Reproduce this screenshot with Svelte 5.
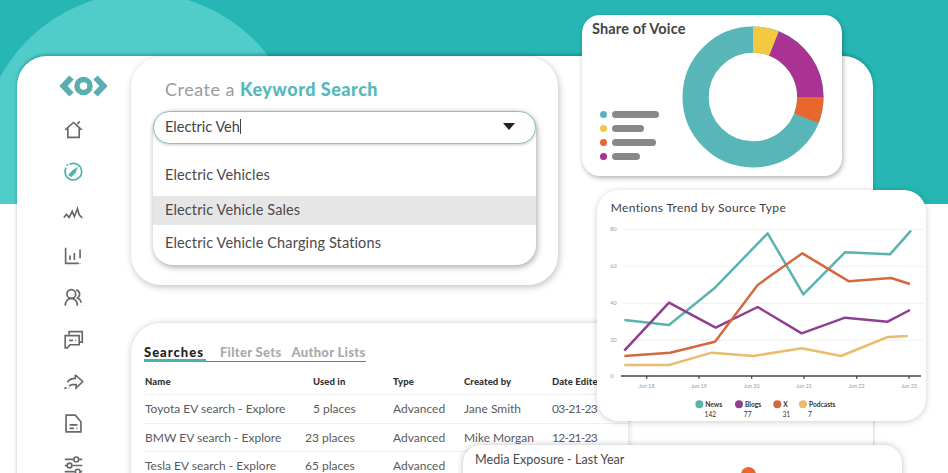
<script>
  const rows = [
    { name: 'Toyota EV search - Explore', used: '5 places', indent: true, type: 'Advanced', by: 'Jane Smith', date: '03-21-23' },
    { name: 'BMW EV search - Explore', used: '23 places', indent: false, type: 'Advanced', by: 'Mike Morgan', date: '12-21-23' },
    { name: 'Tesla EV search - Explore', used: '65 places', indent: false, type: 'Advanced', by: '', date: '' }
  ];
  const suggestions = ['Electric Vehicles', 'Electric Vehicle Sales', 'Electric Vehicle Charging Stations'];
  const legend = [
    { c: '#58b6b8', w: 47 },
    { c: '#f5c842', w: 32 },
    { c: '#e8672c', w: 44 },
    { c: '#a93292', w: 28 }
  ];
  const series = [
    { c: '#5bb3ad', p: '88,390 222,405 358,295 518,130 625,313 750,187 885,193 948,122' },
    { c: '#8f3f8f', p: '88,482 222,338 362,413 488,351 620,430 750,383 878,395 945,360' },
    { c: '#d2693f', p: '88,498 225,488 360,455 488,285 520,262 622,190 762,274 888,264 945,282' },
    { c: '#e9bd6c', p: '88,525 222,525 350,488 475,498 620,475 738,498 878,441 938,438' }
  ];
  const ticks = [
    { x: 155, t: 'Jun 18' }, { x: 312, t: 'Jun 19' }, { x: 470, t: 'Jun 20' },
    { x: 627, t: 'Jun 21' }, { x: 785, t: 'Jun 22' }, { x: 942, t: 'Jun 23' }
  ];
  const yLabels = [{ y: 118, t: '80' }, { y: 228, t: '60' }, { y: 340, t: '40' }, { y: 450, t: '20' }, { y: 558, t: '0' }];
  const keys = [
    { c: '#5bb3ad', x: 313, t: 'News', n: '142', nx: 340 },
    { c: '#8f3f8f', x: 432, t: 'Blogs', n: '77', nx: 452 },
    { c: '#d2693f', x: 547, t: 'X', n: '31', nx: 568 },
    { c: '#e9bd6c', x: 624, t: 'Podcasts', n: '7', nx: 639 }
  ];
</script>

<div class="stage">
  <div class="hero"><div class="circle"></div></div>

  <div class="panel">
    <nav class="rail">
      <svg class="logo" viewBox="0 0 47 22" aria-label="logo">
        <path d="M11.500 2.500 3.500 11l8 8.500M35.500 2.500 43.500 11l-8 8.500" />
        <circle cx="23.500" cy="11" r="6.500" />
      </svg>
      <svg class="ico" viewBox="0 0 24 24"><path d="M2.500 12.500 12 4l9.500 8.500M5.500 10.500V21h13V10.500M16.500 6l2.500-3.500" /></svg>
      <svg class="ico on" viewBox="0 0 24 24"><path d="M7.500 3.700A9.500 9.500 0 1 1 3.500 7.500" /><path class="fill" d="M17 6.500 14.500 13.500 10 18l-3.500-.500 0-2.500 4.500-4.500z" /><circle class="fill" cx="5" cy="4.500" r="1.100" /></svg>
      <svg class="ico" viewBox="0 0 24 24"><path d="M1 16.500 4 13l3 3.500 3.500-7L13 15.500 16.500 6.500 18.500 13.500 22 17" /></svg>
      <svg class="ico" viewBox="0 0 24 24"><path d="M3 3v18h15M8 17v-5M13 17V9M19.500 15V5M19.500 20.500v.5" /></svg>
      <svg class="ico" viewBox="0 0 24 24"><circle cx="9.500" cy="8" r="5" /><path d="M2.500 21.500c0-5 3-8.500 7-8.500s7 3.500 7 8.500M15 3.300a5 5 0 0 1 1.500 9.200c2.500 1 4 3.500 4 5.500M21 21v.5" /></svg>
      <svg class="ico" viewBox="0 0 24 24"><path d="M7 6.500V3h15v12h-3" /><path d="M2.500 7.500h16V18H8l-3 3.500H2.500zM7 13h4.500M14 13h1" /></svg>
      <svg class="ico" viewBox="0 0 24 24"><path d="M14 4.500 22.500 12 15 19.500v-4H10.500L7 17M5 13C7 9.500 10 8.500 14 8.500V4.500M1.500 19.500h2.500M6.500 19.500h.5" /></svg>
      <svg class="ico" viewBox="0 0 24 24"><path d="M3.500 2.500h10.500l6.500 7.500v11.500H3.500zM7.500 13.500h9M7.500 17.500h5M15.500 17.500h1" /></svg>
      <svg class="ico" viewBox="0 0 24 24"><path d="M2 5h10M18.500 5h3.500M2 12h2.500M11 12h11M2 19h11.500M20 19h2" /><circle cx="15.200" cy="5" r="2.700" /><circle cx="7.500" cy="12" r="2.700" /><circle cx="16.800" cy="19" r="2.700" /></svg>
    </nav>
  </div>

  <section class="card search">
    <h2>Create a <b>Keyword Search</b></h2>
    <div class="combo">
      <div class="input"><span>Electric Veh<i class="cursor"></i></span><i class="caret"></i></div>
      <ul>
        {#each suggestions as s, i}
          <li class:hl={i === 1}>{s}</li>
        {/each}
      </ul>
    </div>
  </section>

  <section class="card lists">
    <div class="tabs">
      <span class="tab active">Searches</span>
      <span class="tab">Filter Sets</span>
      <span class="tab">Author Lists</span>
    </div>
    <div class="row head">
      <span>Name</span><span class="indent">Used in</span><span>Type</span><span>Created by</span><span>Date Edited</span>
    </div>
    {#each rows as r}
      <div class="row">
        <span>{r.name}</span>
        <span class:indent={r.indent}>{r.used}</span>
        <span>{r.type}</span>
        <span>{r.by}</span>
        <span class="date">{r.date}</span>
      </div>
    {/each}
  </section>

  <section class="card voice">
    <h3>Share of Voice</h3>
    <ul class="keys">
      {#each legend as l}
        <li><i class="dot" style:background={l.c}></i><i class="bar" style:width="{l.w}px"></i></li>
      {/each}
    </ul>
    <svg class="donut" viewBox="0 0 142 142">
      <g fill="none" stroke-width="26.200" transform="rotate(-90 71 71)">
        <circle cx="71" cy="71" r="57.400" pathLength="360" stroke="#58b6b8" />
        <circle cx="71" cy="71" r="57.400" pathLength="360" stroke="#f5c842" stroke-dasharray="21.500 338.500" />
        <circle cx="71" cy="71" r="57.400" pathLength="360" stroke="#a93292" stroke-dasharray="68.500 291.500" stroke-dashoffset="-21.500" />
        <circle cx="71" cy="71" r="57.400" pathLength="360" stroke="#e8672c" stroke-dasharray="21.700 338.300" stroke-dashoffset="-90" />
      </g>
    </svg>
  </section>

  <section class="card trend">
    <svg viewBox="0 0 987 693" class="chart">
      <text class="ctitle" x="41" y="67">Mentions Trend by Source Type</text>
      {#each yLabels as y, i}
        {#if i < 4}<line x1="78" x2="980" y1={y.y} y2={y.y} class="grid" />{/if}
        <text class="ylab" x="40" y={y.y + 6}>{y.t}</text>
      {/each}
      <line x1="72" x2="972" y1="558" y2="558" class="axis" />
      {#each ticks as t}
        <line x1={t.x - 6} x2={t.x - 6} y1="558" y2="566" class="axis" />
        <text class="xlab" x={t.x - 6} y="594">{t.t}</text>
      {/each}
      {#each series as s}
        <polyline points={s.p} transform="translate(-6 0)" fill="none" stroke={s.c} stroke-width="7.500" stroke-linejoin="round" />
      {/each}
      {#each keys as k}
        <circle cx={k.x - 6} cy="643" r="12" fill={k.c} />
        <text class="key" x={k.x + 12} y="650">{k.t}</text>
        <text class="num" x={k.nx} y="680" text-anchor="middle">{k.n}</text>
      {/each}
    </svg>
  </section>

  <section class="card media">
    <h3>Media Exposure - Last Year</h3>
    <i class="blip"></i>
  </section>
</div>

<style>
  :global(body) { margin: 0; background: #fff; }
  .stage {
    position: relative; width: 948px; height: 473px; overflow: hidden; background: #fff;
    font-family: Lato, "Liberation Sans", sans-serif; color: #4a4a4c;
  }
  .hero { position: absolute; inset: 0 0 auto 0; height: 204px; background: #26b6b3; overflow: hidden; }
  .circle { position: absolute; left: -19px; top: -7px; width: 320px; height: 320px; border-radius: 50%; background: #50cdc9; }
  .panel {
    position: absolute; left: 17px; top: 56px; width: 856px; height: 460px; background: #fff;
    border-radius: 30px; box-shadow: 0 -2px 3px rgba(0, 80, 80, .25), 0 0 4px rgba(0, 0, 0, .12);
  }
  .rail { width: 112px; display: flex; flex-direction: column; align-items: center; padding-top: 19px; gap: 21px; }
  .logo { width: 47px; height: 22px; fill: none; stroke: #5aaeb0; stroke-width: 6; margin: 0 0 .5px 21px; }
  .logo circle { stroke-width: 5.500; }
  .ico { width: 21px; height: 21px; fill: none; stroke: #68686a; stroke-width: 1.900; flex: none; }
  .ico.on { stroke: #4fb3b0; }
  .ico .fill { fill: #4fb3b0; stroke: none; }

  .card { position: absolute; background: #fff; }
  h2, h3 { margin: 0; font-weight: 400; }

  .search {
    left: 131px; top: 57px; width: 427px; height: 228px; border-radius: 30px; box-sizing: border-box;
    padding: 21px 22px 0; box-shadow: 1px 2px 7px rgba(0, 0, 0, .25);
  }
  .search h2 { font-size: 18px; line-height: 22px; padding-left: 12px; color: #9b9b9b; letter-spacing: .5px; }
  .search b { color: #55b8ba; font-weight: 900; }
  .combo { margin-top: 11px; border-radius: 20px; box-shadow: 1px 2px 6px rgba(0, 0, 0, .35); height: 154px; }
  .input {
    height: 33px; box-sizing: border-box; border: 1px solid #8fbfc1; border-radius: 17px; padding: 0 20px 2px 11px;
    display: flex; align-items: center; justify-content: space-between; font-size: 14.500px; color: #444; background: #fff;
    box-shadow: 0 1px 3px rgba(0, 0, 0, .2);
  }
  .cursor { display: inline-block; width: 1px; height: 15px; background: #444; vertical-align: -2px; }
  .caret { width: 0; height: 0; border: 6.500px solid transparent; border-top: 7px solid #222; border-bottom: 0; }
  ul { list-style: none; margin: 0; padding: 0; }
  .combo ul { padding-top: 14px; }
  .combo li { height: 34.500px; line-height: 33px; padding-left: 12px; font-size: 14.500px; letter-spacing: .13px; color: #4a4a4c; }
  .combo li.hl { background: #e6e6e6; height: 29px; line-height: 28px; margin: 3px 0 1.500px; }

  .lists {
    left: 131px; top: 323px; width: 497px; height: 190px; border-radius: 30px; box-sizing: border-box;
    padding: 21px 0 0 13px; box-shadow: 0 0 6px rgba(0, 0, 0, .2);
  }
  .tabs { display: flex; gap: 16px; font-size: 13px; font-weight: 900; width: 222px; border-bottom: 1px solid #777; height: 17px; letter-spacing: .3px; color: #aaa; line-height: 16px; position: relative; white-space: nowrap; }
  .tab:nth-child(3) { margin-left: -6px; }
  .tab.active { color: #222; letter-spacing: 1px; }
  .tab.active::after { content: ""; position: absolute; left: 0; top: 15px; width: 62px; height: 3px; background: #4fb0b0; }
  .row {
    display: grid; grid-template-columns: 160px 88px 71px 88px 90px; height: 28.500px; align-items: center;
    font-size: 12px; letter-spacing: 0; color: #5a5a5c; border-bottom: 1px solid #f0f0f0; box-sizing: border-box; padding-left: 1px;
    white-space: nowrap;
  }
  .row > span.indent { padding-left: 8px; }
  .row .date { letter-spacing: -.7px; }
  .row.head { font-size: 9.500px; font-weight: 900; color: #333; height: 26px; margin-top: 7px; letter-spacing: .1px; }

  .voice {
    left: 582px; top: 15px; width: 260px; height: 161px; border-radius: 18px; box-sizing: border-box; padding: 5px 10px;
    box-shadow: 1px 2px 5px rgba(0, 0, 0, .3);
  }
  .voice h3 { font-size: 14.500px; line-height: 18px; color: #444; letter-spacing: .15px; font-weight: 700; }
  .keys { margin-top: 73px; margin-left: 8px; display: flex; flex-direction: column; gap: 7px; }
  .keys li { display: flex; align-items: center; gap: 5px; height: 7px; }
  .dot { width: 7px; height: 7px; border-radius: 50%; }
  .bar { height: 7px; border-radius: 4px; background: #888; }
  .donut { position: absolute; left: 100px; top: 11px; width: 142px; height: 142px; }

  .trend {
    left: 597px; top: 190px; width: 329px; height: 231px; border-radius: 22px; box-shadow: 0 1px 6px rgba(0, 0, 0, .2);
  }
  .chart { display: block; width: 329px; height: 231px; font-family: Lato, "Liberation Sans", sans-serif; }
  .ctitle { font-size: 36px; fill: #3d3d3f; letter-spacing: 1.100px; }
  .ylab, .xlab { font-size: 16px; fill: #999; }
  .xlab { text-anchor: middle; }
  .grid { stroke: #efefef; stroke-width: 3; }
  .axis { stroke: #444; stroke-width: 4; }
  .key { font-size: 20px; fill: #333; font-weight: 700; }
  .num { font-size: 20px; fill: #333; }

  .media {
    left: 463px; top: 445px; width: 439px; height: 60px; border-radius: 18px; box-sizing: border-box; padding: 6px 12px;
    box-shadow: 0 0 6px rgba(0, 0, 0, .25);
  }
  .media h3 { font-size: 12.600px; line-height: 18px; color: #4a4a4c; }
  .blip { position: absolute; left: 278px; top: 22px; width: 15px; height: 15px; border-radius: 50%; background: #e8672c; }
</style>
